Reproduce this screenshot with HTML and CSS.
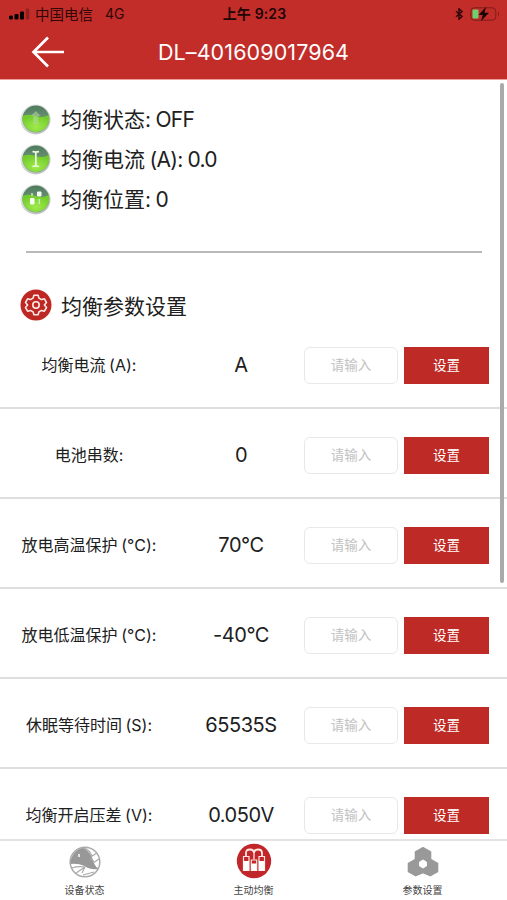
FILE: index.html
```html
<!DOCTYPE html>
<html lang="zh-CN">
<head>
<meta charset="utf-8">
<title>DL–401609017964</title>
<link rel="stylesheet" href="styles.css">
</head>
<body>
<div class="app">
  <header class="header">
    <div class="statusbar">
      <div class="carrier">
        <svg width="21" height="12" viewBox="0 0 21 12"><rect x="0" y="7.500" width="4" height="4" rx="1.500"/><rect x="5.500" y="6" width="4" height="5.500" rx="1"/><rect x="11" y="3.500" width="4" height="8" rx="1"/><rect x="16.800" y="0.500" width="3.500" height="11" rx="1" opacity=".25"/></svg>
        <span class="carrier-name">中国电信</span><span>4G</span>
      </div>
      <div class="clock">上午 9:23</div>
      <div class="indicators">
        <svg width="8" height="12" viewBox="0 0 8 12" fill="none" stroke="#300808" stroke-width="1.500"><path d="M1 3.300l6 5.200-3 2.700V.8l3 2.700-6 5.200"/></svg>
        <svg width="30" height="14" viewBox="0 0 30 14"><rect x=".8" y=".8" width="25" height="12.400" rx="3.500" fill="none" stroke="#7d1d19" stroke-width="1"/><rect x="2.500" y="2.500" width="6" height="9" rx="1" fill="#6fd06f"/><path d="M28 4.500q2 2.500 0 5z" fill="#7d1d19"/><path d="M16 0L8.500 8h4.300L11 14l8-8.200h-4.500z" fill="#180404"/></svg>
      </div>
    </div>
    <div class="navbar">
      <svg class="back" width="34" height="32" viewBox="0 0 34 32" fill="none" stroke="#fff" stroke-width="2.700"><path d="M33 16H2.500M17 1.500L2.500 16 17 30.500"/></svg>
      <h1 class="title">DL–401609017964</h1>
    </div>
  </header>

  <main class="content">
    <svg class="defs" width="0" height="0"><defs>
      <linearGradient id="rim" x1="0" y1="0" x2="1" y2="1"><stop offset="0" stop-color="#eceeee"/><stop offset="1" stop-color="#b0b8b0"/></linearGradient>
      <linearGradient id="glass" x1="0" y1="0" x2="0" y2="1"><stop offset="0" stop-color="#4f7c5d"/><stop offset="1" stop-color="#88a390"/></linearGradient>
      <radialGradient id="fluid" cx=".5" cy=".7" r=".65"><stop offset="0" stop-color="#a0ea4c"/><stop offset="1" stop-color="#72cc2c"/></radialGradient>
      <g id="orb"><circle cx="15.500" cy="15.500" r="15" fill="url(#rim)"/><circle cx="15.800" cy="15" r="13.400" fill="url(#glass)"/><path d="M2.700 12q6-2.500 13 0t13.100-1a13.400 13.400 0 1 1-26.100 1z" fill="url(#fluid)"/></g>
    </defs></svg>
    <section class="summary">
      <div class="stat"><svg width="31" height="31"><use href="#orb"/><path d="M15.800 7l5 5h-2.500v8h-5v-8h-2.500z" fill="#b6d99c" opacity=".55"/></svg><span class="text">均衡状态<span class="latin">: OFF</span></span></div>
      <div class="stat"><svg width="31" height="31"><use href="#orb"/><path d="M12.500 7.500q3.500 1 6.500 0M15.800 8v14M12.500 22.500q3.500-1 6.500 0" fill="none" stroke="#f0ffdf" stroke-width="1.700"/></svg><span class="text">均衡电流<i class="gap"></i><span class="latin">(A): 0.0</span></span></div>
      <div class="stat"><svg width="31" height="31"><use href="#orb"/><path d="M10.500 14.500h3.500v5.500h-3.500zM17.500 8h3.500v4h-3.500z" fill="#f6fff0" stroke="#f6fff0"/><path d="M12 9v3M19.300 15v5" stroke="#c7edaa" stroke-width="1.500"/></svg><span class="text">均衡位置<span class="latin">: 0</span></span></div>
    </section>
    <hr class="divider">
    <h2 class="section-title">
      <svg width="32" height="32" viewBox="0 0 32 32"><circle cx="16" cy="16" r="15.500" fill="#be2824"/><g fill="none" stroke="#ffe9e5" stroke-width="1.600" stroke-linejoin="round"><path d="M13.900 6.200h4.200l.8 2.900 2.600 1.500 2.900-.8 2.100 3.700-2.100 2.500 2.100 2.500-2.100 3.700-2.900-.8-2.600 1.500-.8 2.900h-4.200l-.8-2.900-2.600-1.500-2.900.8-2.100-3.700L7.600 16l-2.100-2.500 2.100-3.700 2.900.8 2.600-1.500z"/><circle cx="16" cy="16" r="3.200"/></g></svg>
      <span>均衡参数设置</span>
    </h2>
    <section class="settings">
      <div class="row"><label class="label">均衡电流<i class="gap"></i>(A):</label><span class="value">A</span><input class="field" placeholder="请输入"><button class="set">设置</button></div>
      <div class="row"><label class="label">电池串数:</label><span class="value">0</span><input class="field" placeholder="请输入"><button class="set">设置</button></div>
      <div class="row"><label class="label">放电高温保护<i class="gap"></i>(°C):</label><span class="value">70°C</span><input class="field" placeholder="请输入"><button class="set">设置</button></div>
      <div class="row"><label class="label">放电低温保护<i class="gap"></i>(°C):</label><span class="value">-40°C</span><input class="field" placeholder="请输入"><button class="set">设置</button></div>
      <div class="row"><label class="label">休眠等待时间<i class="gap"></i>(S):</label><span class="value">65535S</span><input class="field" placeholder="请输入"><button class="set">设置</button></div>
      <div class="row"><label class="label">均衡开启压差<i class="gap"></i>(V):</label><span class="value">0.050V</span><input class="field" placeholder="请输入"><button class="set">设置</button></div>
    </section>
    <div class="scrollbar"></div>
  </main>

  <nav class="tabs">
    <a class="tab"><svg width="32" height="32" viewBox="0 0 32 32"><circle cx="16" cy="16" r="14.800" fill="#fff" stroke="#aaa" stroke-width="1.500"/><path d="M1.500 17C2 9 8 2 15 2q7 5 9 12 1.500 6 5.500 9-8 1-14-3-7-3-14-2z" fill="#989898"/><path d="M16 2q5 3 7 8l5-3M23 10q-3 4 2 5M30 13l-6 4M3 22q6-2 13-1l-3 6M7 27l9-6M25 26l-11 3" fill="none" stroke="#aaa" stroke-width="1.200"/><path d="M10 8v3" stroke="#fff" stroke-width="1.500"/></svg><span>设备状态</span></a>
    <a class="tab"><svg class="raised" width="36" height="36" viewBox="0 0 36 36"><circle cx="18" cy="18" r="17.200" fill="#c1272a"/><g fill="none" stroke="#ffe7e4" stroke-width="1.800"><path d="M10 13V10q0-3.500 4-3.500t4 4q0-4 4-4t4 3.500v3"/><path d="M18 10.500v6" stroke-width="1.300"/><path d="M7.500 13.500h5.500v14H7.500zM15.300 17h5.400v10.500h-5.400zM23 13.500h5.500v14H23z" stroke-width="1.200"/></g><path d="M7.500 18h5.500v9.500H7.500zM15.300 20.500h5.400v7h-5.400zM23 18h5.500v9.500H23z" fill="#fff"/></svg><span>主动均衡</span></a>
    <a class="tab"><svg width="32" height="30" viewBox="0 0 32 30"><path d="M16 .8l7.500 4.200v7.500l7 4v8L23.300 28.600 16 25.500 8.700 28.600 1.500 24.500v-8l7-4V5z" fill="#999" stroke="#999" stroke-width="1.600" stroke-linejoin="round"/><path d="M16 13l3.400 2v4L16 21l-3.400-2v-4z" fill="#fff" stroke="#fff"/></svg><span>参数设置</span></a>
  </nav>
</div>
</body>
</html>
```

FILE: styles.css
```css
* { box-sizing: border-box; }

body {
  margin: 0;
  background: #fff;
  color: #202020;
  font-family: Inter, "Noto Sans CJK SC", sans-serif;
}

svg { flex: none; display: block; }

.app {
  display: flex;
  flex-direction: column;
  width: 507px;
  height: 900px;
  overflow: hidden;
}

.header {
  flex: none;
  height: 80px;
  background: #c22d2a;
  border-bottom: 1px solid #ee9d9b;
}

.statusbar {
  display: grid;
  grid-template-columns: 1fr auto 1fr;
  align-items: center;
  height: 27px;
  padding: 0 7px 0 9px;
  color: #300808;
  font-size: 14px;
}

.carrier { display: flex; align-items: center; }
.carrier svg { margin-right: 5px; }
.carrier-name { margin-right: 12px; font-size: 14.5px; }
.clock { padding-bottom: 1px; color: #200505; font-size: 14px; font-weight: 600; letter-spacing: 0.15px; }
.indicators { display: flex; align-items: center; justify-content: flex-end; gap: 7px; }

.navbar {
  display: grid;
  grid-template-columns: 65px 1fr 65px;
  align-items: center;
  height: 50px;
}

.back { justify-self: end; }

.title {
  margin: 0;
  color: #fff;
  font-size: 21.5px;
  font-weight: 400;
  letter-spacing: 0.1px;
  text-align: center;
}

.content {
  position: relative;
  flex: 1;
  min-height: 0;
  overflow: hidden;
  padding-top: 19px;
}

.defs { position: absolute; }

.stat {
  display: flex;
  align-items: center;
  gap: 10px;
  height: 40.4px;
  padding-left: 20px;
  font-size: 21px;
  white-space: nowrap;
}

.text { padding-bottom: 3px; }
.latin { letter-spacing: -0.75px; }

.gap { display: inline-block; width: 0.22em; }

.divider {
  height: 2px;
  margin: 30.8px 25px 0 26px;
  border: 0;
  background: #b9b9b9;
}

.section-title {
  display: flex;
  align-items: center;
  gap: 9px;
  height: 32px;
  margin: 36px 0 0;
  padding-left: 20px;
  font-size: 21px;
  font-weight: 400;
}

.row {
  display: grid;
  grid-template-columns: 178px 126px 94px 85px;
  align-items: center;
  height: 90px;
  padding: 5px 0 0;
  border-bottom: 2px solid #dedede;
}

.row:first-child { height: 88px; padding-top: 3px; }

.label {
  padding-bottom: 2px;
  font-size: 16px;
  text-align: center;
  white-space: nowrap;
}

.value { font-size: 20px; letter-spacing: -0.45px; text-align: center; }

.field {
  width: 94px;
  height: 37px;
  padding: 0;
  border: 1px solid #e8e8e8;
  border-radius: 6px;
  background: #fff;
  font: 13.5px Inter, "Noto Sans CJK SC", sans-serif;
  text-align: center;
}

.field::placeholder { color: #c2c2c2; }

.set {
  width: 85px;
  height: 37px;
  margin-left: 6px;
  padding: 0 0 2px;
  border: 0;
  background: #be2a25;
  color: #fff;
  font: 13.5px Inter, "Noto Sans CJK SC", sans-serif;
}

.scrollbar {
  position: absolute;
  top: 3px;
  right: 3px;
  width: 4px;
  height: 500px;
  border-radius: 2px;
  background: #aaa;
}

.tabs {
  flex: none;
  display: grid;
  grid-template-columns: repeat(3, 1fr);
  height: 61px;
  border-top: 2px solid #e3e3e3;
  background: #fff;
}

.tab {
  display: grid;
  grid-template-rows: 42px 14px;
  place-items: center;
  color: #444;
  font-size: 10px;
  line-height: 14px;
}

.raised { margin-bottom: 2px; }
```
